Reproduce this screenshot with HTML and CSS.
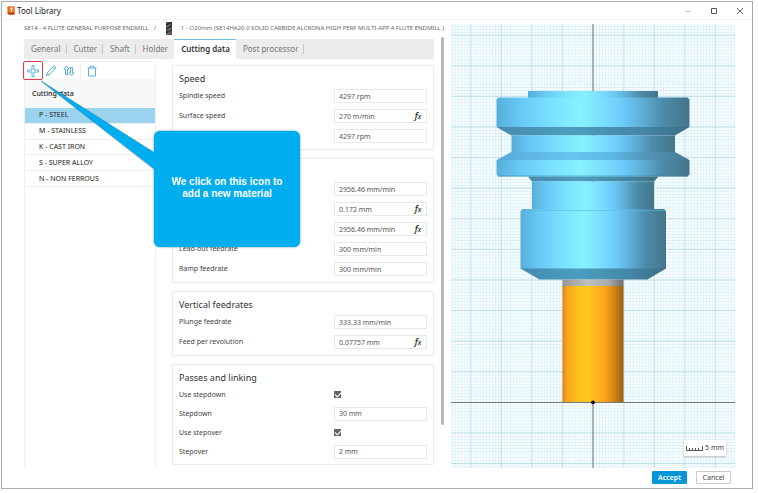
FILE: index.html
```
<!DOCTYPE html>
<html lang="en">
<head>
<meta charset="utf-8">
<title>Tool Library</title>
<link rel="stylesheet" href="styles.css">
</head>
<body>
<div class="window">
  <header class="titlebar">
    <svg class="app-icon" viewBox="0 0 16 18"><path d="M2 1h11l2 2v14H3l-2-2V1z" fill="#d9520c"/><path d="M3 1h12v13H3z" fill="#f47b20"/><path d="M7 3h4v4H7zM8 8h2v4H8z" fill="#fff2df"/><path d="M1 15l2-2h12v4H3z" fill="#b93c06"/></svg>
    <h1 class="app-title">Tool Library</h1>
    <div class="window-controls">
      <button aria-label="Minimize"><svg viewBox="0 0 8 8"><path d="M1 4.500h6" stroke="#ccc"/></svg></button>
      <button aria-label="Maximize"><svg viewBox="0 0 8 8"><path d="M1.500 1.500h5v5h-5z" fill="none" stroke="#555"/></svg></button>
      <button aria-label="Close"><svg viewBox="0 0 8 8"><path d="M1 1l6 6M7 1L1 7" stroke="#555" stroke-width=".9"/></svg></button>
    </div>
  </header>

  <main class="content">
    <div class="editor">
      <nav class="breadcrumb">
        <a href="#">S814 - 4 FLUTE GENERAL PURPOSE ENDMILL</a>
        <span class="slash">/</span>
        <svg class="tool-thumb" viewBox="0 0 6 13"><path d="M0 0h6v13H0z" fill="#555"/><path d="M0 3l6-3M0 7l6-4M0 11l6-4" stroke="#222" stroke-width="1.500"/><path d="M1 5l3-2M2 9l3-2M1 12l2-1" stroke="#aaa" stroke-width=".7"/></svg>
        <span>1 - ∅20mm (S814HA20.0 SOLID CARBIDE ALCRONA HIGH PERF MULTI-APP 4 FLUTE ENDMILL )</span>
      </nav>
      <div class="workspace">
        <nav class="tabs">
          <a href="#">General</a><a href="#">Cutter</a><a href="#">Shaft</a><a href="#">Holder</a><a href="#" class="active">Cutting data</a><a href="#">Post processor</a>
        </nav>
        <div class="columns">
          <aside class="presets">
            <div class="toolbar">
              <button class="add" aria-label="Add"><svg viewBox="0 0 12 12"><path d="M5 .5h2V5h4.500v2H7v4.500H5V7H.5V5H5z"/></svg></button>
              <button aria-label="Edit"><svg viewBox="0 0 12 12"><path d="M1.500 10.500l.7-2.800L9 .9l2 2-6.800 6.900zM7.800 2.100l2 2M2.200 7.700l2 2"/></svg></button>
              <button aria-label="Reorder"><svg viewBox="0 0 12 12"><path d="M3.500 1L1 4h1.500v5.500h2V4H6zM8.500 11L6 8h1.500V2.500h2V8H11zM4.500 9.500h1M6.500 2.500h1"/></svg></button>
              <button class="delete" aria-label="Delete"><svg viewBox="0 0 12 12"><path d="M1.500 3h9M4 3V1.200h4V3M2.500 3v8h7V3"/></svg></button>
            </div>
            <h2 class="presets-title">Cutting data</h2>
            <div class="preset-list">
              <button class="selected">P - STEEL</button>
              <button>M - STAINLESS</button>
              <button>K - CAST IRON</button>
              <button>S - SUPER ALLOY</button>
              <button>N - NON FERROUS</button>
            </div>
          </aside>
          <form class="cards">
            <section class="card">
              <h2>Speed</h2>
              <div class="row"><label for="f1">Spindle speed</label><div class="field"><input id="f1" value="4297 rpm"></div></div>
              <div class="row"><label for="f2">Surface speed</label><div class="field"><input id="f2" value="270 m/min"><button type="button" class="fx">f<small>x</small></button></div></div>
              <div class="row"><label for="f3">Ramp spindle speed</label><div class="field"><input id="f3" value="4297 rpm"></div></div>
            </section>
            <section class="card">
              <h2>Feedrates</h2>
              <div class="row"><div class="field"><input aria-label="Cutting feedrate" value="2956.46 mm/min"></div></div>
              <div class="row"><div class="field"><input aria-label="Feed per tooth" value="0.172 mm"><button type="button" class="fx">f<small>x</small></button></div></div>
              <div class="row"><label for="f6">Lead-in feedrate</label><div class="field"><input id="f6" value="2956.46 mm/min"><button type="button" class="fx">f<small>x</small></button></div></div>
              <div class="row"><label for="f7">Lead-out feedrate</label><div class="field"><input id="f7" value="300 mm/min"></div></div>
              <div class="row"><label for="f8">Ramp feedrate</label><div class="field"><input id="f8" value="300 mm/min"></div></div>
            </section>
            <section class="card">
              <h2>Vertical feedrates</h2>
              <div class="row"><label for="f9">Plunge feedrate</label><div class="field"><input id="f9" value="333.33 mm/min"></div></div>
              <div class="row"><label for="f10">Feed per revolution</label><div class="field"><input id="f10" value="0.07757 mm"><button type="button" class="fx">f<small>x</small></button></div></div>
            </section>
            <section class="card dense">
              <h2>Passes and linking</h2>
              <div class="row"><label for="f11">Use stepdown</label><div class="check"><input id="f11" type="checkbox" checked></div></div>
              <div class="row"><label for="f12">Stepdown</label><div class="field"><input id="f12" value="30 mm"></div></div>
              <div class="row"><label for="f13">Use stepover</label><div class="check"><input id="f13" type="checkbox" checked></div></div>
              <div class="row"><label for="f14">Stepover</label><div class="field"><input id="f14" value="2 mm"></div></div>
            </section>
          </form>
        </div>
        <div class="callout">
          <svg class="pointer" viewBox="0 0 118 92"><path d="M1 1L118 75V92z" fill="#00aeef"/><path d="M115 73L1 1L115 90" fill="none" stroke="#2384aa" stroke-width=".6"/></svg>
          <p>We click on this icon to add a new material</p>
        </div>
      </div>
      <div class="scroll-thumb"></div>
    </div>

    <div class="preview">
      <svg class="scene" viewBox="451 24 284 444" preserveAspectRatio="xMidYMid slice">
        <defs>
          <pattern id="minor" width="3.060" height="3.060" patternUnits="userSpaceOnUse" x="593" y="402.300"><path d="M0 0H3.060M0 0V3.060" stroke="#d3eef8" stroke-width="1"/></pattern>
          <pattern id="major" width="30.600" height="30.600" patternUnits="userSpaceOnUse" x="578" y="387"><path d="M0 15.300H30.600M15 0V30.600" stroke="#b5dae6" stroke-width=".8"/></pattern>
          <linearGradient id="steel">
            <stop offset="0" stop-color="#57aed9"/><stop offset=".12" stop-color="#68c8f5"/><stop offset=".3" stop-color="#7be3ff"/><stop offset=".44" stop-color="#86f1ff"/><stop offset=".56" stop-color="#7bdcff"/><stop offset=".66" stop-color="#6dc9f8"/><stop offset=".78" stop-color="#5aa7cc"/><stop offset=".86" stop-color="#4c8baa"/><stop offset="1" stop-color="#43758b"/>
          </linearGradient>
          <linearGradient id="under">
            <stop offset="0" stop-color="#458bae"/><stop offset=".4" stop-color="#4b9ebf"/><stop offset=".75" stop-color="#4386a6"/><stop offset="1" stop-color="#3e6e85"/>
          </linearGradient>
          <linearGradient id="upper">
            <stop offset="0" stop-color="#57abd8"/><stop offset=".4" stop-color="#67c5ef"/><stop offset=".6" stop-color="#5db7e4"/><stop offset=".8" stop-color="#5091b2"/><stop offset="1" stop-color="#457b95"/>
          </linearGradient>
          <linearGradient id="flute">
            <stop offset="0" stop-color="#d98a18"/><stop offset=".08" stop-color="#fba61c"/><stop offset=".25" stop-color="#ffc020"/><stop offset=".42" stop-color="#ffc922"/><stop offset=".68" stop-color="#ffa51b"/><stop offset=".8" stop-color="#e09018"/><stop offset="1" stop-color="#996116"/>
          </linearGradient>
          <linearGradient id="shank">
            <stop offset="0" stop-color="#969696"/><stop offset=".4" stop-color="#bfbfbf"/><stop offset=".75" stop-color="#aaa"/><stop offset="1" stop-color="#707070"/>
          </linearGradient>
        </defs>
        <path d="M0 0H1500V1500H0z" fill="#f8fdff"/>
        <path d="M0 0H1500V1500H0z" fill="url(#minor)"/>
        <path d="M0 0H1500V1500H0z" fill="url(#major)"/>
        <path d="M593 0V1500M0 402.500H1500" stroke="#777" stroke-width="1"/>
        <path d="M528 91H658V98H528z" fill="url(#steel)"/>
        <path d="M498.500 97.500H687.500L689.500 99.500V127H496.500V99.500z" fill="url(#steel)"/>
        <path d="M496.500 127H689.500L675 135.500H511.500z" fill="url(#under)"/>
        <path d="M511.500 135.500H675V152H511.500z" fill="url(#steel)"/>
        <path d="M511.500 152H675L689.500 160H496.500z" fill="url(#upper)"/>
        <path d="M496.500 160H689.500V174.500L687.500 176.500H498.500L496.500 174.500z" fill="url(#steel)"/>
        <path d="M498 176h190" stroke="#3c7894" stroke-width="1" stroke-opacity=".5"/>
        <path d="M528 176.500H658.500L654 181.500H532z" fill="url(#under)"/>
        <path d="M532 181.500H654V209H532z" fill="url(#steel)"/>
        <path d="M522.500 209H664L666 211V269H520.500V211z" fill="url(#steel)"/>
        <path d="M521.500 210.500H665" stroke="#5cb4df" stroke-opacity=".6"/>
        <path d="M520.500 268.500H666L647.500 279.500H539.500z" fill="url(#under)"/>
        <path d="M562.500 279.500H623.500V286H562.500z" fill="url(#shank)"/>
        <path d="M562.500 286H623.500V402H562.500z" fill="url(#flute)"/>
        <circle cx="593" cy="402.300" r="1.900"/>
      </svg>
      <div class="scale"><svg viewBox="0 0 17 5"><path d="M.5 0v4.500h16V0M3.500 2v3M6.500 2v3M9.500 2v3M12.500 2v3" fill="none" stroke="#555"/></svg><span>5 mm</span></div>
    </div>
  </main>

  <footer class="actions">
    <button class="primary">Accept</button>
    <button>Cancel</button>
  </footer>
</div>
</body>
</html>
```
FILE: styles.css
```
* { box-sizing: border-box; }
body { margin: 0; padding: 1px 5px 4px 1px; background: #fff; color: #444; font: 7px/10px "Noto Sans", sans-serif; }
h1, h2 { margin: 0; font-weight: 400; }
p { margin: 0; }
a { color: inherit; text-decoration: none; }
button { margin: 0; padding: 0; border: 0; background: none; color: inherit; font: inherit; }
svg { display: block; }

.window { display: flex; flex-direction: column; height: calc(100vh - 5px); border: 1px solid #aaa; }

.titlebar { display: flex; align-items: center; gap: 2px; height: 18px; padding: 0 8px 0 5px; border-bottom: 1px solid #f4f4f4; }
.app-icon { width: 8px; height: 9px; }
.app-title { color: #222; font-size: 8px; }
.window-controls { display: flex; gap: 18px; margin-left: auto; }
.window-controls svg { width: 8px; height: 8px; }

.content { display: flex; flex: 1; min-height: 0; padding: 4px 17px 0 22px; }
.editor { display: grid; grid-template-columns: 410px 3px; grid-template-rows: 15px 1fr; column-gap: 7px; width: 427px; flex: none; }
.breadcrumb { grid-column: 1 / -1; display: flex; align-items: center; gap: 5px; height: 8px; color: #666; font-size: 6px; line-height: 8px; white-space: nowrap; }
.tool-thumb { flex: none; width: 6px; height: 13px; margin: 0 4px 0 5px; }
.workspace { position: relative; display: flex; flex-direction: column; }
.scroll-thumb { height: 388px; margin-top: -2px; border-radius: 2px; background: #b8b8b8; }

.tabs { display: flex; height: 20px; background: #ececec; color: #777; font-size: 8px; line-height: 20px; }
.tabs a { position: relative; padding: 0 6px 0 7px; }
.tabs a:not(.active)::after { content: ""; position: absolute; top: 5px; right: 0; width: 1px; height: 10px; background: #c8c8c8; }
.tabs a:nth-child(4)::after { display: none; }
.tabs .active { border-top: 1px solid #6cc0dc; background: #fff; color: #333; font-weight: 600; line-height: 18px; }

.columns { display: grid; grid-template-columns: 132px 1fr; column-gap: 16px; flex: 1; }
.presets { margin-top: 2px; border: 1px solid #f0f0f0; border-width: 1px 1px 0; }
.toolbar { display: flex; align-items: center; height: 17px; }
.toolbar button { display: grid; place-items: center; width: 18px; height: 16px; }
.toolbar svg { width: 12px; height: 12px; fill: none; stroke: #36a3d2; stroke-width: .8; }
.toolbar .add { width: 20px; height: 19px; margin: 0 -1px 0 -2px; border: 1px solid #e33d48; border-radius: 2px; }
.toolbar .delete { width: 23px; margin-left: 2px; border-left: 1px solid #eee; }
.presets-title { height: 29px; padding-left: 7px; background: #f6f8fa; color: #222; font-size: 7px; font-weight: 500; line-height: 29px; }
.preset-list { display: grid; grid-template-rows: repeat(5, 1fr); height: 79px; }
.preset-list button { padding-left: 14px; border-bottom: 1px solid #eee; color: #222; text-align: left; }
.preset-list .selected { background: #9bd3ee; }

.cards { display: flex; flex-direction: column; gap: 8px; padding-top: 6px; }
.card { padding: 7px 6px 3px; border: 1px solid #ebebeb; border-radius: 2px; box-shadow: 0 0 1px #e8e8e8; }
.card h2 { height: 13px; color: #333; font-size: 9px; line-height: 12px; }
.row { display: flex; align-items: center; height: 20px; }
.dense .row { height: 19px; }
.field, .check { width: 93px; margin-left: auto; }
.field { display: flex; align-items: center; height: 14px; border: 1px solid #e8e8e8; }
.field input { flex: 1; min-width: 0; width: 0; height: 12px; padding: 0 0 0 4px; border: 0; background: none; color: #555; font: inherit; }
.fx { width: 16px; color: #222; font-size: 9px; font-style: italic; font-weight: 500; line-height: 12px; }
.fx small { font-size: 7px; }
.check input { display: grid; place-items: center; width: 7px; height: 7px; margin: 0; appearance: none; background: #666; }
.check input:checked::after { content: ""; width: 5px; height: 3px; margin-top: -1px; border: solid #fff; border-width: 0 0 1px 1px; transform: rotate(-45deg); }

.callout { position: absolute; left: 130px; top: 92px; display: grid; place-items: center; width: 146px; height: 116px; border-radius: 6px; background: #00aeef; box-shadow: 0 0 2px #2384aa; color: #fff; font: bold 10px/12px "Liberation Sans", Arial, sans-serif; text-align: center; }
.callout p { width: 126px; padding-bottom: 2px; }
.pointer { position: absolute; left: -114px; top: -51px; width: 118px; height: 92px; }

.preview { position: relative; flex: 1; min-width: 0; overflow: hidden; }
.scene { position: absolute; inset: 0; width: 100%; height: 100%; }
.scale { position: absolute; right: 9px; bottom: 12px; display: flex; align-items: center; gap: 2px; height: 16px; padding: 0 2px; background: #fff; box-shadow: 0 1px 2px #bbb; font-size: 7px; }
.scale svg { width: 17px; height: 5px; }

.actions { display: flex; justify-content: flex-end; gap: 9px; padding: 3px 21px 4px 0; }
.actions button { width: 35px; height: 13px; border: 1px solid #ccc; border-radius: 1px; line-height: 11px; }
.actions .primary { border-color: #0696d7; background: #0696d7; color: #fff; font-weight: 600; }
```
